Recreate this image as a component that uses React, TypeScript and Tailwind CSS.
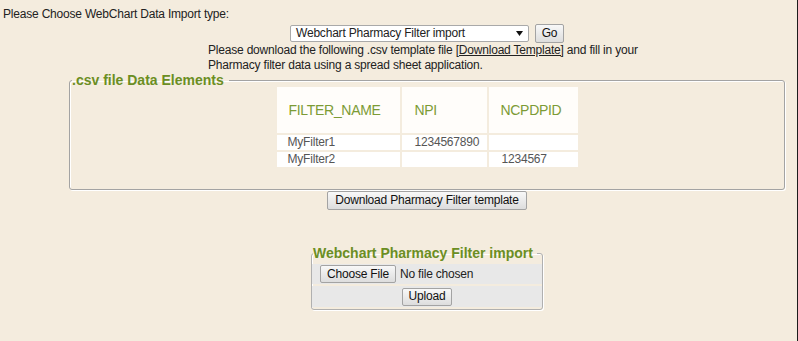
import React from "react";

const rows = [
  { name: "MyFilter1", npi: "1234567890", ncpdp: "" },
  { name: "MyFilter2", npi: "", ncpdp: "1234567" },
];

function Btn({ children, className = "" }: { children: React.ReactNode; className?: string }) {
  return (
    <button
      type="button"
      className={
        "flex items-center justify-center rounded-[2px] border border-[#a3a3a3] bg-linear-to-b from-[#f8f8f8] to-[#dddddd] text-[12px] leading-[15px] text-[#111] " +
        className
      }
    >
      {children}
    </button>
  );
}

export default function App() {
  return (
    <div className="h-[341px] w-[798px] overflow-hidden border-r border-[#1c1c1c] bg-[#f4ecde] font-['Liberation_Sans',Arial,sans-serif] text-[12px] leading-[15px] tracking-[-0.2px] text-[#222]">
      <div className="pl-[3px] pt-[7px]">Please Choose WebChart Data Import type:</div>
      <div className="ml-[69px] flex w-[716px] flex-col items-center">
        <div className="mt-[2px] flex items-center gap-[6px]">
          <div className="flex h-[17px] w-[239px] items-center justify-between rounded-[2px] border border-[#a9a9a9] bg-white pl-[5px] pr-[4px]">
            <span>Webchart Pharmacy Filter import</span>
            <svg width="7" height="5" viewBox="0 0 7 5" className="mr-[1px]">
              <path d="M0 0h7L3.5 5z" fill="#111" />
            </svg>
          </div>
          <Btn className="h-[19px] w-[29px]">Go</Btn>
        </div>
        <p className="w-[438px]">
          {"Please download the following .csv template file "}
          <span className="underline">[Download Template]</span>
          {" and fill in your"}
          {" "}
          {"Pharmacy filter data using a spread sheet application."}
        </p>
        <fieldset className="w-full rounded-[3px] border border-[#a3a3a3] pb-[20px] shadow-[inset_1px_1px_0_#fff,1px_1px_0_#fff]">
          <legend className="ml-[2px] pr-[5px] text-[14px] font-bold leading-[14px] tracking-normal text-[#6b8e23]">
            .csv file Data Elements
          </legend>
          <table className="mx-auto -mt-[2px] border-separate border-spacing-[2px]">
            <thead>
              <tr>
                <th className="h-[46px] w-[123px] bg-[#fffdfa] pl-[12px] text-left align-middle text-[14px] font-normal tracking-[-0.3px] text-[#7c9b35]">
                  FILTER_NAME
                </th>
                <th className="h-[46px] w-[85px] bg-[#fffdfa] pl-[13px] text-left align-middle text-[14px] font-normal tracking-[-0.3px] text-[#7c9b35]">
                  NPI
                </th>
                <th className="h-[46px] w-[89px] bg-[#fffdfa] pl-[12px] text-left align-middle text-[14px] font-normal tracking-[-0.3px] text-[#7c9b35]">
                  NCPDPID
                </th>
              </tr>
            </thead>
            <tbody>
              {rows.map((r) => (
                <tr key={r.name}>
                  <td className="h-[15px] bg-white p-0 pl-[11px] leading-[15px] text-[#555]">{r.name}</td>
                  <td className="h-[15px] bg-white p-0 pl-[13px] leading-[15px] text-[#555]">{r.npi}</td>
                  <td className="h-[15px] bg-white p-0 pl-[13px] leading-[15px] text-[#555]">{r.ncpdp}</td>
                </tr>
              ))}
            </tbody>
          </table>
        </fieldset>
        <Btn className="mt-[1px] h-[19px] px-[7px]">Download Pharmacy Filter template</Btn>
        <fieldset className="mt-[36px] w-[232px] rounded-[3px] border border-[#b0b0b0] shadow-[inset_1px_1px_0_#fff,1px_1px_0_#fff]">
          <legend className="ml-[1px] pr-[4px] text-[14px] font-bold leading-[14px] tracking-normal text-[#6b8e23]">
            Webchart Pharmacy Filter import
          </legend>
          <table className="mt-[2px] w-full border-separate border-spacing-x-0 border-spacing-y-[2px]">
            <tbody>
              <tr>
                <td className="h-[20px] bg-[#e8e8e8] p-0 pl-[8px]">
                  <div className="flex items-center gap-[4px]">
                    <Btn className="h-[18px] w-[76px]">Choose File</Btn>
                    <span>No file chosen</span>
                  </div>
                </td>
              </tr>
              <tr>
                <td className="h-[21px] bg-[#e8e8e8] p-0">
                  <div className="flex justify-center">
                    <Btn className="h-[18px] w-[50px]">Upload</Btn>
                  </div>
                </td>
              </tr>
            </tbody>
          </table>
        </fieldset>
      </div>
    </div>
  );
}
